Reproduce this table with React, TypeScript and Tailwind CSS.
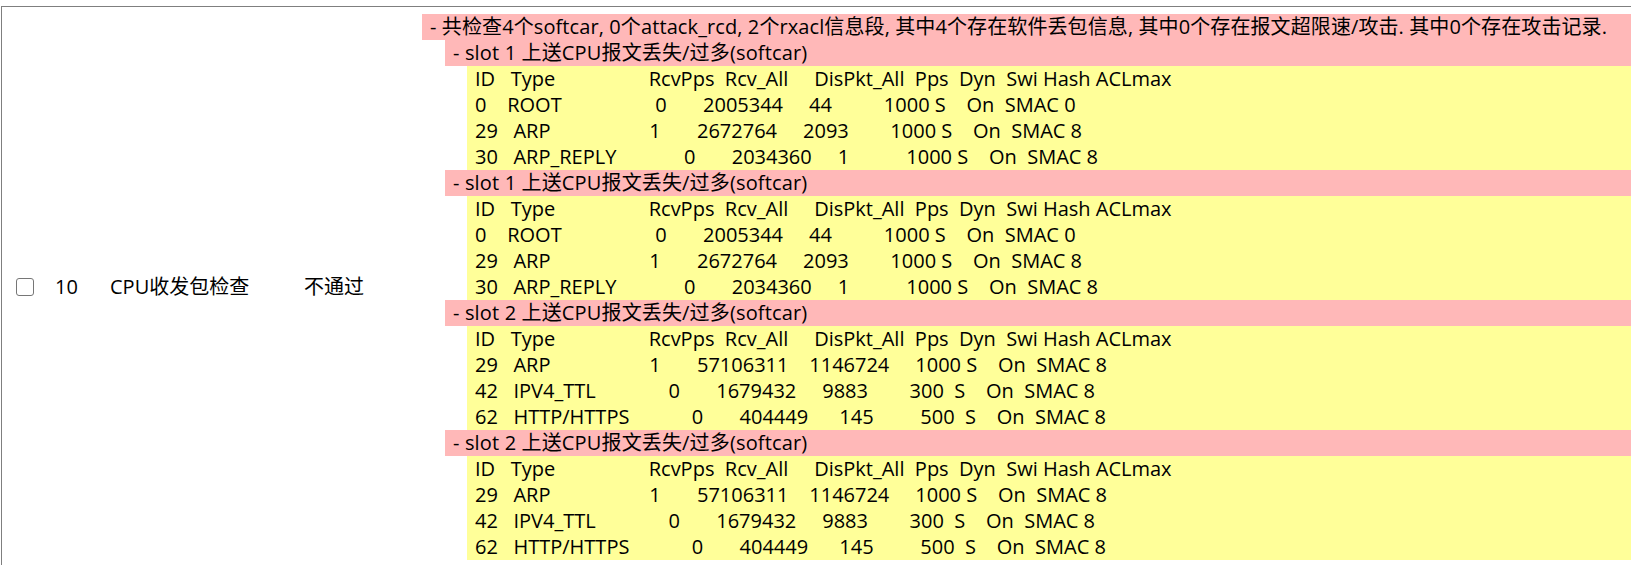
import React from "react";

const widths = [5, 22, 8, 12, 12, 5, 5, 4, 5];

function fmt(cols: string[]): string {
  return cols.map((c, i) => (i < widths.length ? c.padEnd(widths[i], " ") : c)).join("");
}

const header = ["ID", "Type", "RcvPps", "Rcv_All", "DisPkt_All", "Pps", "Dyn", "Swi", "Hash", "ACLmax"];

const slot1Rows: string[][] = [
  ["0", "ROOT", "0", "2005344", "44", "1000", "S", "On", "SMAC", "0"],
  ["29", "ARP", "1", "2672764", "2093", "1000", "S", "On", "SMAC", "8"],
  ["30", "ARP_REPLY", "0", "2034360", "1", "1000", "S", "On", "SMAC", "8"],
];

const slot2Rows: string[][] = [
  ["29", "ARP", "1", "57106311", "1146724", "1000", "S", "On", "SMAC", "8"],
  ["42", "IPV4_TTL", "0", "1679432", "9883", "300", "S", "On", "SMAC", "8"],
  ["62", "HTTP/HTTPS", "0", "404449", "145", "500", "S", "On", "SMAC", "8"],
];

function Row({ cols }: { cols: string[] }) {
  return <div className="h-[26px] whitespace-pre pl-[8px]">{fmt(cols)}</div>;
}

function Slot({ slot, rows }: { slot: number; rows: string[][] }) {
  return (
    <div>
      <div className="h-[26px] whitespace-nowrap bg-[#ffb8b8] pl-[8px] tracking-[0.15px]">
        - slot {slot} 上送CPU报文丢失/过多(softcar)
      </div>
      <div className="ml-[22px] bg-[#ffff99]">
        <Row cols={header} />
        {rows.map((r, i) => (
          <Row key={i} cols={r} />
        ))}
      </div>
    </div>
  );
}

export default function App() {
  return (
    <div className="min-h-screen bg-white pl-px pt-[6px] text-black font-['Open_Sans','Noto_Sans_CJK_SC',sans-serif] text-[20px] leading-[26px]">
      <div className="flex items-center border-l border-t border-[#7f7f7f] pb-[5px] pt-[7px]">
        <div className="flex w-[53px] shrink-0 items-center">
          <input
            type="checkbox"
            readOnly
            className="ml-[14px] h-[18px] w-[18px] appearance-none rounded-[3px] border border-[#767676] bg-white"
          />
        </div>
        <div className="w-[55px] shrink-0">10</div>
        <div className="w-[194px] shrink-0">CPU收发包检查</div>
        <div className="w-[118px] shrink-0">不通过</div>
        <div className="min-w-0 flex-1">
          <div className="h-[26px] whitespace-nowrap bg-[#ffb8b8] pl-[8px] tracking-[0.1px]">
            - 共检查4个softcar, 0个attack_rcd, 2个rxacl信息段, 其中4个存在软件丢包信息, 其中0个存在报文超限速/攻击. 其中0个存在攻击记录.
          </div>
          <div className="ml-[23px]">
            <Slot slot={1} rows={slot1Rows} />
            <Slot slot={1} rows={slot1Rows} />
            <Slot slot={2} rows={slot2Rows} />
            <Slot slot={2} rows={slot2Rows} />
          </div>
        </div>
      </div>
    </div>
  );
}
